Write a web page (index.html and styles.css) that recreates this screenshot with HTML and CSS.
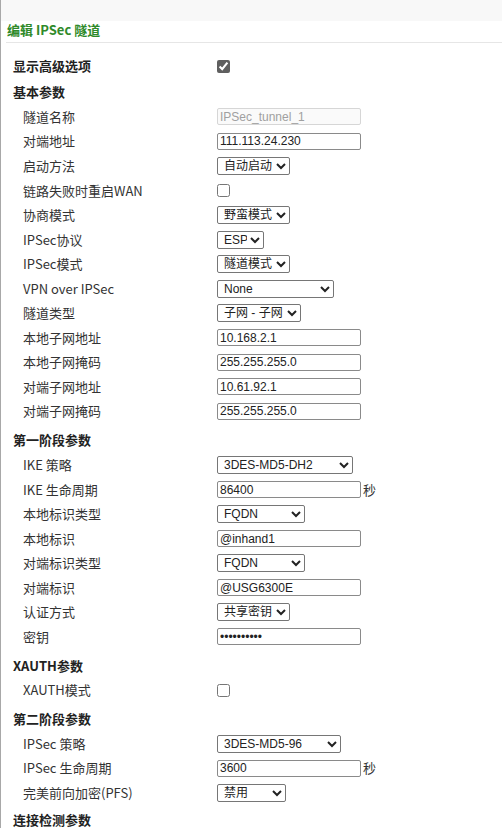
FILE: index.html
```html
<!DOCTYPE html>
<html lang="zh-CN">
<head>
  <meta charset="UTF-8" />
  <meta name="viewport" content="width=device-width, initial-scale=1.0"/>
  <title>编辑 IPSec 隧道</title>
  <link rel="stylesheet" href="styles.css">
</head>
<body>
  <div class="topbar"></div>
  <h1 class="title">编辑 IPSec 隧道</h1>

  <div class="form">
    <div class="row section"><span>显示高级选项</span><input type="checkbox" class="check" checked></div>
    <div class="row section first"><span>基本参数</span></div>
    <div class="row"><label>隧道名称</label><input type="text" class="text" value="IPSec_tunnel_1" disabled></div>
    <div class="row"><label>对端地址</label><input type="text" class="text" value="111.113.24.230"></div>
    <div class="row"><label>启动方法</label><select class="sel w73"><option>自动启动</option></select></div>
    <div class="row"><label>链路失败时重启WAN</label><input type="checkbox" class="check"></div>
    <div class="row"><label>协商模式</label><select class="sel w73"><option>野蛮模式</option></select></div>
    <div class="row"><label>IPSec协议</label><select class="sel w47"><option>ESP</option></select></div>
    <div class="row"><label>IPSec模式</label><select class="sel w73"><option>隧道模式</option></select></div>
    <div class="row"><label>VPN over IPSec</label><select class="sel w117"><option>None</option></select></div>
    <div class="row"><label>隧道类型</label><select class="sel w84"><option>子网 - 子网</option></select></div>
    <div class="row"><label>本地子网地址</label><input type="text" class="text" value="10.168.2.1"></div>
    <div class="row"><label>本地子网掩码</label><input type="text" class="text" value="255.255.255.0"></div>
    <div class="row"><label>对端子网地址</label><input type="text" class="text" value="10.61.92.1"></div>
    <div class="row"><label>对端子网掩码</label><input type="text" class="text" value="255.255.255.0"></div>

    <div class="row section"><span>第一阶段参数</span></div>
    <div class="row"><label>IKE 策略</label><select class="sel w136"><option>3DES-MD5-DH2</option></select></div>
    <div class="row"><label>IKE 生命周期</label><div class="with-unit"><input type="text" class="text" value="86400"><span class="unit">秒</span></div></div>
    <div class="row"><label>本地标识类型</label><select class="sel w88"><option>FQDN</option></select></div>
    <div class="row"><label>本地标识</label><input type="text" class="text" value="@inhand1"></div>
    <div class="row"><label>对端标识类型</label><select class="sel w88"><option>FQDN</option></select></div>
    <div class="row"><label>对端标识</label><input type="text" class="text" value="@USG6300E"></div>
    <div class="row"><label>认证方式</label><select class="sel w73"><option>共享密钥</option></select></div>
    <div class="row"><label>密钥</label><input type="password" class="text" value="1234567890"></div>

    <div class="row section"><span>XAUTH参数</span></div>
    <div class="row"><label>XAUTH模式</label><input type="checkbox" class="check"></div>

    <div class="row section"><span>第二阶段参数</span></div>
    <div class="row"><label>IPSec 策略</label><select class="sel w124"><option>3DES-MD5-96</option></select></div>
    <div class="row"><label>IPSec 生命周期</label><div class="with-unit"><input type="text" class="text" value="3600"><span class="unit">秒</span></div></div>
    <div class="row"><label>完美前向加密(PFS)</label><select class="sel w69"><option>禁用</option></select></div>

    <div class="row section last"><span>连接检测参数</span></div>
  </div>
</body>
</html>
```

FILE: styles.css
```css
:root {
  --title-green: #2f8a2a;
  --label-color: #333333;
  --line-color: #e6e6e6;
}

* {
  box-sizing: border-box;
}

body {
  margin: 0;
  min-height: 828px;
  border-left: 1px solid #a8a8a8;
  font-family: 'Noto Sans CJK SC', 'Noto Sans', sans-serif;
  font-size: 13px;
  color: var(--label-color);
  background: #ffffff;
}

.topbar {
  height: 21px;
  background-color: #f8f8f8;
}

.title {
  margin: 0 0 0 5px;
  padding-left: 1px;
  height: 22px;
  line-height: 18px;
  font-size: 13px;
  font-weight: bold;
  color: var(--title-green);
  border-bottom: 1px solid var(--line-color);
}

.form {
  padding-top: 11px;
}

.row {
  display: grid;
  grid-template-columns: 216px auto;
  align-items: center;
  height: 24.55px;
  line-height: 16px;
}

.row label {
  padding-left: 22px;
}

.row.section {
  padding-left: 12px;
  font-weight: bold;
  color: #222;
  grid-template-columns: 204px auto;
  height: 29px;
  padding-top: 4.4px;
}

.row.section.first {
  height: 26px;
  padding-top: 1.4px;
}

.row.section.last {
  height: 27px;
  padding-top: 2.4px;
}

.row.section:first-child {
  height: 24.6px;
  padding-top: 0;
}

.text {
  width: 144px;
  height: 17px;
  margin: 0;
  padding: 0 2px;
  font-family: 'Liberation Sans', Arial, sans-serif;
  font-size: 12px;
  color: #222;
  border: 1px solid #8a8a8a;
  border-radius: 2px;
}

.text:disabled {
  color: #a0a0a0;
  background-color: #fafafa;
  border-color: #d6d6d6;
}

.sel {
  height: 18px;
  margin: 0;
  padding: 0 0 0 2px;
  font-family: 'Liberation Sans', 'Noto Sans CJK SC', Arial, sans-serif;
  font-size: 12px;
  color: #222;
  border: 1px solid #767676;
  border-radius: 2px;
  background-color: #fff;
}

.w47 { width: 47px; }
.w69 { width: 69px; }
.w73 { width: 73px; }
.w84 { width: 84px; }
.w88 { width: 88px; }
.w117 { width: 117px; }
.w124 { width: 124px; }
.w136 { width: 136px; }

.check {
  width: 13px;
  height: 13px;
  margin: 0;
  accent-color: #5f5f5f;
}

.with-unit {
  display: flex;
  align-items: center;
  gap: 2px;
}

.unit {
  font-size: 13px;
}
```
